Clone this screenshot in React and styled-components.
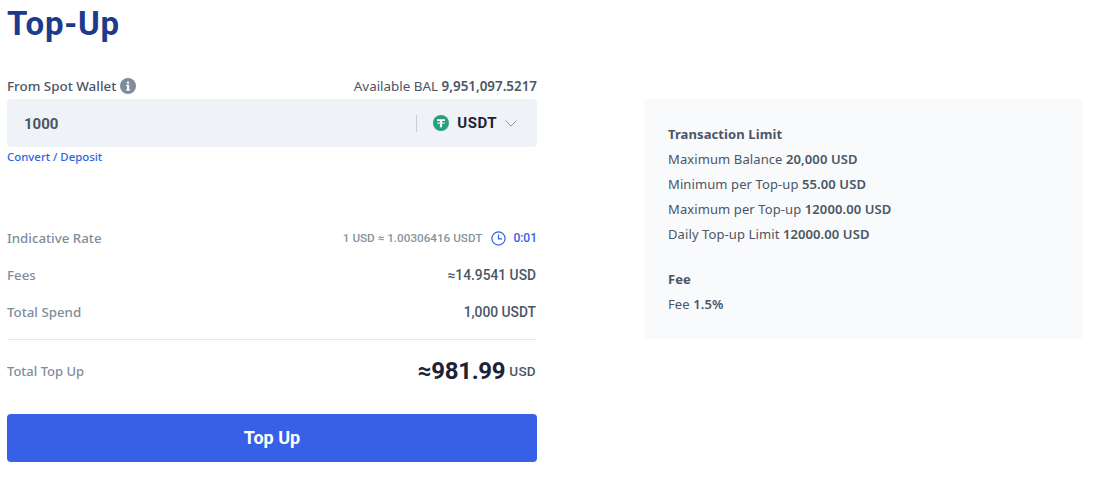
import React from "react";
import styled, { createGlobalStyle } from "styled-components";

const Global = createGlobalStyle`
  html, body { margin: 0; padding: 0; background: #fff; }
  body { font-family: "Noto Sans", "Liberation Sans", sans-serif; -webkit-font-smoothing: antialiased; }
`;

const Page = styled.div`
  width: 1093px;
  height: 477px;
  box-sizing: border-box;
  padding: 0 10px 0 7px;
  overflow: hidden;
`;
const Title = styled.h1`
  margin: 0;
  height: 99px;
  box-sizing: border-box;
  font: 700 33px/48px Roboto, sans-serif;
  color: #1c3b8c;
  letter-spacing: 0.8px;
`;
const Columns = styled.div`
  display: flex;
  justify-content: space-between;
  align-items: flex-start;
  margin-top: -99px;
`;
const Left = styled.section`
  width: 530px;
  padding-top: 76px;
`;
const LabelRow = styled.div`
  display: flex;
  justify-content: space-between;
  align-items: center;
  height: 19px;
  padding-bottom: 4px;
  font-size: 13.4px;
  color: #4a5666;
`;
const LabelLeft = styled.span`
  display: flex;
  align-items: center;
  gap: 4px;
  font-weight: 500;
`;
const Strong = styled.strong`
  font-weight: 600;
`;
const InputBox = styled.div`
  display: flex;
  align-items: center;
  height: 48px;
  padding: 0 20px 0 17px;
  background: #eff2f7;
  border-radius: 4px;
`;
const Amount = styled.span`
  flex: 1;
  padding-top: 1px;
  font: 700 15px Roboto, sans-serif;
  color: #4a5666;
`;
const Divider = styled.span`
  width: 1px;
  height: 17px;
  background: #c6d0db;
  margin-right: 16px;
`;
const Currency = styled.span`
  margin: 0 8px;
  font: 700 15px Roboto, sans-serif;
  letter-spacing: 0.5px;
  color: #1b2436;
`;
const Link = styled.a`
  display: block;
  height: 20px;
  font: 500 11.4px/20px "Noto Sans", sans-serif;
  color: #2e63e6;
`;
const Rows = styled.div`
  margin-top: 52px;
  display: flex;
  flex-direction: column;
`;
const Row = styled.div`
  display: flex;
  justify-content: space-between;
  align-items: center;
  height: 37px;
`;
const RowLabel = styled.span`
  font: 500 13.3px "Noto Sans", sans-serif;
  color: #7f8c9c;
`;
const TotalLabel = styled(RowLabel)`
  font-size: 13px;
`;
const RowValue = styled.span`
  font: 500 13.8px Roboto, sans-serif;
  margin-right: 1px;
  color: #4a5666;
`;
const RateValue = styled.span`
  display: flex;
  align-items: center;
  font: 500 11.7px Roboto, sans-serif;
  color: #8593a3;
`;
const Timer = styled.span`
  display: flex;
  align-items: center;
  gap: 7px;
  margin-left: 9px;
  padding-top: 1px;
  color: #2e63e6;
  font-size: 12px;
  font-weight: 500;
`;
const Rule = styled.hr`
  margin: 9px 0 0;
  border: 0;
  border-top: 1px solid #e6e9ee;
`;
const TotalRow = styled.div`
  display: flex;
  justify-content: space-between;
  align-items: center;
  height: 62px;
`;
const TotalValue = styled.span`
  display: flex;
  align-items: center;
  gap: 4px;
`;
const Big = styled.span`
  font: 700 24px Roboto, sans-serif;
  letter-spacing: -0.3px;
  color: #1b2436;
`;
const Unit = styled.span`
  margin-right: 1px;
  font: 500 13.5px Roboto, sans-serif;
  letter-spacing: 0.3px;
  color: #4a5666;
`;
const Button = styled.button`
  display: block;
  width: 100%;
  height: 48px;
  margin-top: 12px;
  padding: 0 0 2px;
  border: 0;
  border-radius: 4px;
  background: #3760e6;
  color: #fff;
  font: 700 18px Roboto, sans-serif;
`;
const Panel = styled.aside`
  width: 439px;
  height: 240px;
  margin-top: 99px;
  box-sizing: border-box;
  padding: 23px 24px;
  background: #f9fafc;
  border-radius: 4px;
  font-size: 13px;
  letter-spacing: 0.1px;
  line-height: 25px;
  color: #4a5666;
`;
const PanelHeading = styled.div`
  font-weight: 700;
  margin-top: ${p => p.$gap || 0}px;
`;
const Line = styled.div``;

const InfoIcon = () => (
  <svg width="16" height="16" viewBox="0 0 16 16">
    <circle cx="8" cy="8" r="8" fill="#7f8c9c" />
    <rect x="7" y="6.8" width="2.2" height="5.6" fill="#fff" />
    <rect x="6" y="6.8" width="2" height="1.1" fill="#fff" />
    <rect x="6" y="11.4" width="4.2" height="1.1" fill="#fff" />
    <circle cx="8" cy="4.6" r="1.2" fill="#fff" />
  </svg>
);
const TetherIcon = () => (
  <svg width="16" height="16" viewBox="0 0 16 16">
    <circle cx="8" cy="8" r="8" fill="#26a17b" />
    <path d="M4 4.2h8v1.9H9.1v1.1c1.7.1 3 .5 3 .9s-1.3.8-3 .9v3.3H6.9V9c-1.7-.1-3-.5-3-.9s1.3-.8 3-.9V6.1H4z" fill="#fff" />
    <path d="M6.9 7.7c-1 .1-1.8.2-1.8.4s1.3.5 2.9.5 2.9-.2 2.9-.5-.8-.3-1.8-.4v.5H6.9z" fill="#26a17b" />
  </svg>
);
const Chevron = () => (
  <svg width="12" height="7" viewBox="0 0 12 7" fill="none" stroke="#8c99a8" strokeWidth="1">
    <path d="M.5.5L6 6l5.5-5.5" />
  </svg>
);
const ClockIcon = () => (
  <svg width="15" height="15" viewBox="0 0 15 15" fill="none" stroke="#2e63e6" strokeWidth="1.2">
    <circle cx="7.5" cy="7.5" r="6.6" />
    <path d="M7.5 3.6v4.2h3.6" />
  </svg>
);

export default function App() {
  return (
    <Page>
      <Global />
      <Title>Top-Up</Title>
      <Columns>
        <Left>
          <LabelRow>
            <LabelLeft>From Spot Wallet <InfoIcon /></LabelLeft>
            <span>Available BAL <Strong>9,951,097.5217</Strong></span>
          </LabelRow>
          <InputBox>
            <Amount>1000</Amount>
            <Divider />
            <TetherIcon />
            <Currency>USDT</Currency>
            <Chevron />
          </InputBox>
          <Link>Convert / Deposit</Link>
          <Rows>
            <Row>
              <RowLabel>Indicative Rate</RowLabel>
              <RateValue>
                1 USD ≈ 1.00306416 USDT
                <Timer><ClockIcon />0:01</Timer>
              </RateValue>
            </Row>
            <Row>
              <RowLabel>Fees</RowLabel>
              <RowValue>≈14.9541 USD</RowValue>
            </Row>
            <Row>
              <RowLabel>Total Spend</RowLabel>
              <RowValue>1,000 USDT</RowValue>
            </Row>
          </Rows>
          <Rule />
          <TotalRow>
            <TotalLabel>Total Top Up</TotalLabel>
            <TotalValue><Big>≈981.99</Big><Unit>USD</Unit></TotalValue>
          </TotalRow>
          <Button>Top Up</Button>
        </Left>
        <Panel>
          <PanelHeading>Transaction Limit</PanelHeading>
          <Line>Maximum Balance <Strong>20,000 USD</Strong></Line>
          <Line>Minimum per Top-up <Strong>55.00 USD</Strong></Line>
          <Line>Maximum per Top-up <Strong>12000.00 USD</Strong></Line>
          <Line>Daily Top-up Limit <Strong>12000.00 USD</Strong></Line>
          <PanelHeading $gap={20}>Fee</PanelHeading>
          <Line>Fee <Strong>1.5%</Strong></Line>
        </Panel>
      </Columns>
    </Page>
  );
}
